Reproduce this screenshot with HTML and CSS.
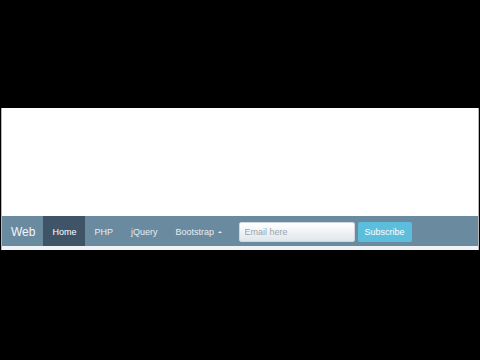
FILE: index.html
```html
<!DOCTYPE html>
<html lang="en">
  <head>
    <meta charset="UTF-8" />
    <title>Web</title>
    <link rel="stylesheet" href="styles.css">
  </head>
  <body>
    <div class="top-bar"></div>
    <div class="page">
      <div class="content"></div>
      <div class="navbar">
        <a class="brand" href="#">Web</a>
        <ul class="nav">
          <li class="active"><a href="#">Home</a></li>
          <li><a href="#">PHP</a></li>
          <li><a href="#">jQuery</a></li>
          <li><a href="#">Bootstrap <span class="caret"></span></a></li>
        </ul>
        <form class="subscribe">
          <input type="text" class="email" placeholder="Email here" />
          <button type="button" class="btn-info">Subscribe</button>
        </form>
      </div>
      <div class="strip"></div>
    </div>
  </body>
</html>
```
FILE: styles.css
```css
html,
body {
  margin: 0;
  padding: 0;
  background: #000;
  font-family: "Liberation Sans", Arial, sans-serif;
}
.top-bar {
  height: 108px;
}
.page {
  background: #fff;
  margin: 0 1px 0 1px;
  border-left: 1px solid #b8b8b8;
  border-right: 1px solid #b8b8b8;
}
.content {
  height: 108px;
}
.navbar {
  display: flex;
  align-items: center;
  height: 30px;
  background: #6a8aa0;
}
.brand {
  color: #f2f5f8;
  font-size: 12px;
  text-decoration: none;
  padding: 1px 8px 0 9px;
  line-height: 30px;
}
.nav {
  display: flex;
  list-style: none;
  margin: 0;
  padding: 0;
  height: 30px;
}
.nav li a {
  display: block;
  color: #e6edf2;
  font-size: 9px;
  text-decoration: none;
  line-height: 30px;
  padding: 1px 9px 0 9px;
  height: 29px;
}
.nav li.active a {
  background: #3f5567;
  color: #fff;
}
.caret {
  display: inline-block;
  width: 0;
  height: 0;
  margin-left: 1px;
  vertical-align: 2px;
  border-left: 2px solid transparent;
  border-right: 2px solid transparent;
  border-bottom: 2px solid #e6edf2;
}
.subscribe {
  display: flex;
  gap: 3px;
  margin-left: 8px;
  padding-top: 2px;
}
.email {
  width: 116px;
  height: 20px;
  box-sizing: border-box;
  border: 1px solid #cfd8de;
  border-radius: 2px;
  padding: 0 5px;
  font-size: 9px;
  font-family: "Liberation Sans", Arial, sans-serif;
  background: linear-gradient(#ffffff, #dfe6ea);
}
.email::placeholder {
  color: #9aa4aa;
}
.btn-info {
  height: 20px;
  border: none;
  border-radius: 2px;
  background: #5bbedc;
  color: #fff;
  font-size: 9px;
  font-family: "Liberation Sans", Arial, sans-serif;
  padding: 0 7px;
}
.strip {
  height: 4px;
  background: #f0f3f5;
}
```
